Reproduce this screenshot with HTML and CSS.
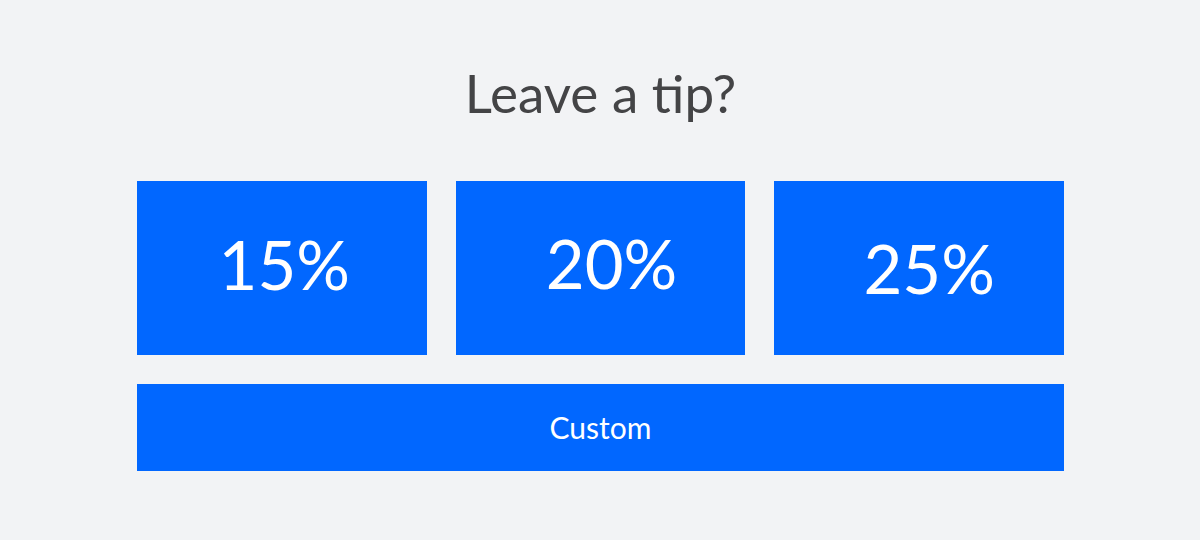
FILE: index.html
```html
<!DOCTYPE html>
<html>
<head>
<meta charset="utf-8">
<link rel="stylesheet" href="styles.css">
</head>
<body>
<main class="tip">
  <h1 class="tip-title">Leave a tip?</h1>
  <div class="tip-options">
    <button class="tip-btn tip-btn--a">15%</button>
    <button class="tip-btn tip-btn--b">20%</button>
    <button class="tip-btn tip-btn--c">25%</button>
  </div>
  <button class="tip-custom">Custom</button>
</main>
</body>
</html>
```
FILE: styles.css
```css
html, body {
  margin: 0;
  padding: 0;
  background: #f2f3f5;
  height: 100%;
}
body {
  font-family: Lato, "Open Sans", sans-serif;
}
.tip {
  width: 927px;
  margin: 0 0 0 137px;
  padding-top: 63px;
  display: flex;
  flex-direction: column;
}
.tip-title {
  margin: 0 0 58px;
  text-align: center;
  font-weight: 400;
  font-size: 53px;
  line-height: 60px;
  color: #444446;
}
.tip-options {
  display: grid;
  grid-template-columns: repeat(3, 1fr);
  gap: 29px;
}
.tip-btn, .tip-custom {
  border: 0;
  margin: 0;
  background: #0167ff;
  color: #fff;
  font-family: inherit;
  font-weight: 400;
  padding: 0;
}
.tip-btn {
  height: 174px;
  font-size: 67px;
  padding-bottom: 8px;
}
.tip-btn--a {
  padding-left: 5px;
}
.tip-btn--b {
  padding-left: 22px;
  padding-bottom: 10px;
}
.tip-btn--c {
  padding-left: 20px;
  padding-bottom: 1px;
}
.tip-custom {
  margin-top: 29px;
  height: 87px;
  font-size: 30px;
  padding-bottom: 2px;
}
```
